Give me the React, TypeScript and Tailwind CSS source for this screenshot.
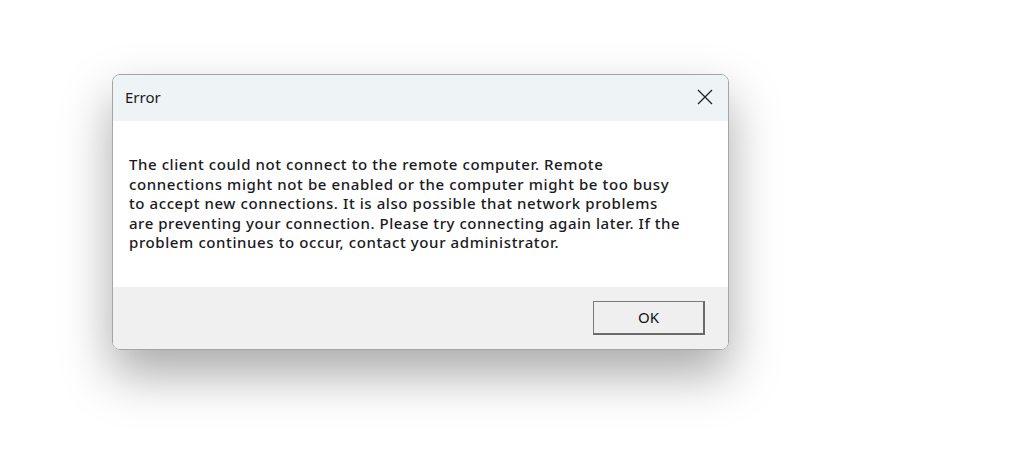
const lines = [
  { text: "The client could not connect to the remote computer. Remote", track: "tracking-[0.58px]" },
  { text: "connections might not be enabled or the computer might be too busy", track: "tracking-[0.6px]" },
  { text: "to accept new connections. It is also possible that network problems", track: "tracking-[0.58px]" },
  { text: "are preventing your connection. Please try connecting again later. If the", track: "tracking-[0.53px]" },
  { text: "problem continues to occur, contact your administrator.", track: "tracking-[0.6px]" },
];

export default function App() {
  return (
    <div
      className="w-[1009px] h-[454px] bg-white pl-[112px] pt-[74px]"
      style={{ fontFamily: '"Noto Sans", "Open Sans", sans-serif' }}
    >
      <div className="w-[617px] h-[276px] flex flex-col rounded-[8px] border border-[#a5a5a5] overflow-hidden shadow-[0_24px_50px_rgba(0,0,0,0.34)]">
        <div className="h-[46px] bg-[#eef3f5] flex items-center justify-between pl-[12px] pr-[15px]">
          <span className="text-[15px] text-[#1b1b1b] -mt-[2px]">Error</span>
          <svg width="16" height="16" viewBox="0 0 16 16" className="text-[#222] -mt-[3px]">
            <path d="M1 1 L15 15 M15 1 L1 15" stroke="currentColor" strokeWidth="1.3" fill="none" />
          </svg>
        </div>
        <div className="h-[166px] bg-white pl-[16px] pt-[34px]">
          <p className="text-[15px] font-medium leading-[19.5px] text-[#1a1a22] whitespace-nowrap">
            {lines.map((l) => (
              <span key={l.text} className={`block ${l.track}`}>
                {l.text}
              </span>
            ))}
          </p>
        </div>
        <div className="flex-1 bg-[#f0f0f0] flex justify-end items-start pt-[14px] pr-[23px]">
          <button className="w-[112px] h-[34px] bg-[#efefef] border border-[#7a7a7a] border-r-2 border-b-2 border-r-[#6a6a6a] border-b-[#6a6a6a] text-[15px] text-[#111]">
            OK
          </button>
        </div>
      </div>
    </div>
  );
}
